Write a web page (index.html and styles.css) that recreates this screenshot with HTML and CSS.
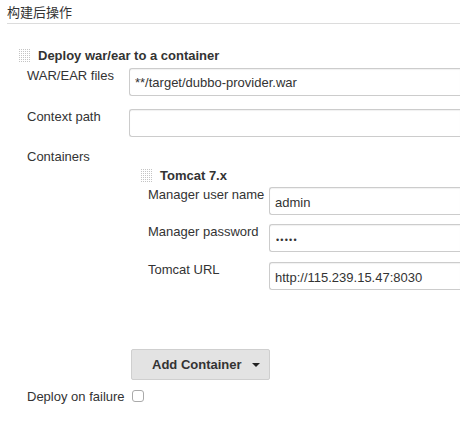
FILE: index.html
```html
<!DOCTYPE html>
<html>
<head>
<meta charset="utf-8">
<link rel="stylesheet" href="styles.css">
</head>
<body>
<div class="page">
  <div class="section-title">构建后操作</div>
  <div class="block outer">
    <div class="head">
      <svg class="grip" width="11" height="14" viewBox="0 0 11 14"><defs><pattern id="g1" width="2" height="2" patternUnits="userSpaceOnUse"><rect width="1" height="1" fill="#c4c4c4"/></pattern></defs><rect width="11" height="14" fill="url(#g1)"/></svg>
      <span class="head-text">Deploy war/ear to a container</span>
    </div>
    <div class="row r1">
      <div class="lbl">WAR/EAR files</div>
      <div class="field"><input class="txt" type="text" value="**/target/dubbo-provider.war"></div>
    </div>
    <div class="row r2">
      <div class="lbl">Context path</div>
      <div class="field"><input class="txt" type="text" value=""></div>
    </div>
    <div class="row r3">
      <div class="lbl">Containers</div>
      <div class="field containers">
        <div class="block inner">
          <div class="head">
            <svg class="grip" width="11" height="14" viewBox="0 0 11 14"><defs><pattern id="g2" width="2" height="2" patternUnits="userSpaceOnUse"><rect width="1" height="1" fill="#c4c4c4"/></pattern></defs><rect width="11" height="14" fill="url(#g2)"/></svg>
            <span class="head-text">Tomcat 7.x</span>
          </div>
          <div class="irow ir1">
            <div class="ilbl">Manager user name</div>
            <div class="field"><input class="txt itxt" type="text" value="admin"></div>
          </div>
          <div class="irow ir2">
            <div class="ilbl">Manager password</div>
            <div class="field"><input class="txt itxt pw" type="text" value="•••••"></div>
          </div>
          <div class="irow ir3">
            <div class="ilbl">Tomcat URL</div>
            <div class="field"><input class="txt itxt" type="text" value="http://115.239.15.47:8030"></div>
          </div>
        </div>
        <button class="btn" type="button"><span>Add Container</span><span class="caret"></span></button>
      </div>
    </div>
    <div class="row r4">
      <div class="lbl">Deploy on failure</div>
      <div class="field"><input class="chk" type="checkbox"></div>
    </div>
  </div>
</div>
</body>
</html>
```
FILE: styles.css
```css
html, body {
  margin: 0;
  padding: 0;
  overflow: hidden;
  background: #fff;
}
.page {
  width: 460px;
  font-family: "Liberation Sans", Arial, "Noto Sans CJK SC", sans-serif;
  font-size: 13px;
  color: #333;
}
.section-title {
  margin-left: 7px;
  padding-top: 5px;
  padding-bottom: 2px;
  line-height: 16px;
  border-bottom: 1px solid #dcdcdc;
}
.outer {
  margin-left: 19px;
  margin-top: 24px;
}
.head {
  display: flex;
  align-items: center;
  height: 16px;
}
.grip {
  flex: none;
  margin-right: 8px;
}
.head-text {
  font-weight: bold;
  line-height: 16px;
}
.row {
  display: flex;
  padding-left: 8px;
}
.lbl {
  width: 102px;
  flex: none;
  line-height: 16px;
}
.field {
  flex: 1;
  min-width: 0;
}
.r1 { margin-top: 4px; }
.r2 { margin-top: 13px; }
.r3 { margin-top: 12px; }
.r4 { margin-top: 9px; }
.txt {
  display: block;
  box-sizing: border-box;
  width: 100%;
  height: 28px;
  margin: 0;
  padding: 0 5px;
  border: 1px solid #cccccc;
  border-right: none;
  border-radius: 3px 0 0 3px;
  box-shadow: inset 0 1px 1px rgba(0,0,0,0.06);
  font-family: "Liberation Sans", Arial, sans-serif;
  font-size: 13px;
  color: #333;
  background: #fff;
  outline: none;
}
.containers {
  padding-left: 12px;
}
.inner {
  margin-top: 19px;
}
.irow {
  display: flex;
  padding-left: 7px;
}
.ilbl {
  width: 121px;
  flex: none;
  line-height: 15px;
}
.ir1 { margin-top: 3px; }
.ir2 { margin-top: 9px; }
.ir3 { margin-top: 10px; }
.itxt { padding-top: 3px; }
.pw {
  font-size: 9px;
  letter-spacing: 1.2px;
  padding-left: 6px;
}
.btn {
  display: flex;
  align-items: center;
  justify-content: space-between;
  box-sizing: border-box;
  width: 139px;
  height: 31px;
  margin: 59px 0 0 -10px;
  padding: 0 9px 0 20px;
  background: #e3e3e3;
  border: 1px solid #cfcfcf;
  border-radius: 2px;
  font-family: "Liberation Sans", Arial, sans-serif;
  font-size: 13px;
  font-weight: bold;
  color: #333;
}
.caret {
  width: 0;
  height: 0;
  border-left: 4px solid transparent;
  border-right: 4px solid transparent;
  border-top: 4px solid #222;
}
.chk {
  appearance: none;
  -webkit-appearance: none;
  display: block;
  width: 12px;
  height: 12px;
  margin: 1px 0 0 3px;
  border: 1px solid #aaa;
  border-radius: 3px;
  background: #fff;
}
```
